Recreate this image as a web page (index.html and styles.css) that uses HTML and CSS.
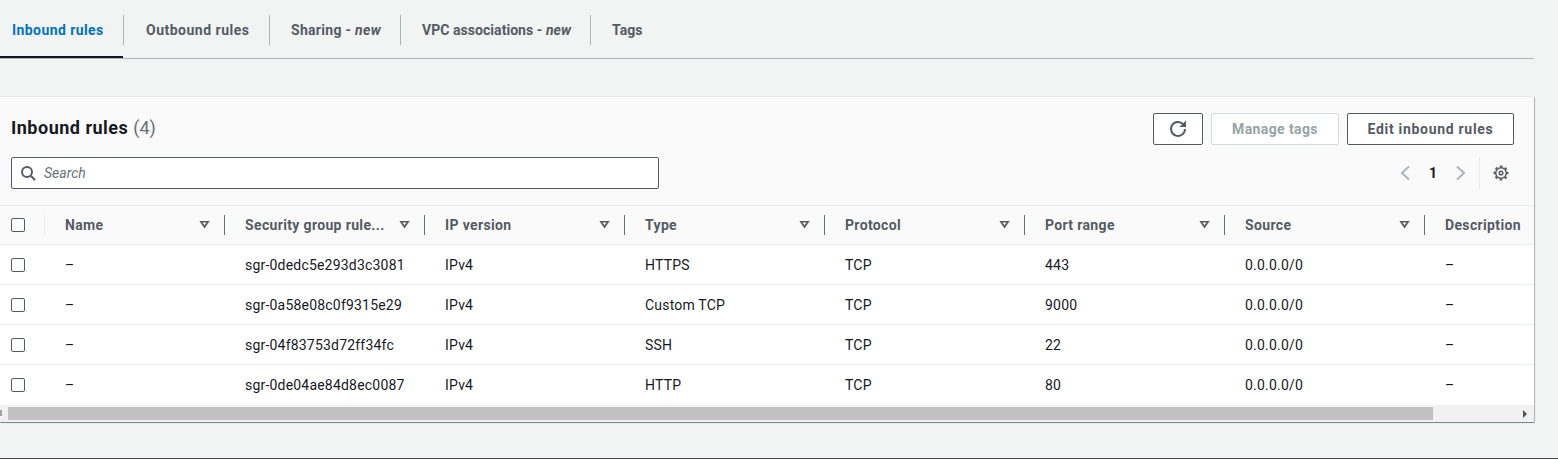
FILE: index.html
```html
<!DOCTYPE html>
<html lang="en">
<head>
<meta charset="utf-8">
<title>Inbound rules</title>
<link rel="stylesheet" href="styles.css">
</head>
<body>
<nav class="tabs">
  <a class="tab tab-inbound active">Inbound rules</a>
  <a class="tab tab-outbound">Outbound rules</a>
  <a class="tab tab-sharing">Sharing - <em>new</em></a>
  <a class="tab tab-vpc">VPC associations - <em>new</em></a>
  <a class="tab tab-tags">Tags</a>
</nav>
<section class="panel">
  <header class="head">
    <div class="head-left">
      <h2 class="title">Inbound rules <span class="count">(4)</span></h2>
      <div class="search">
        <svg class="search-icon" width="16" height="16" viewBox="0 0 16 16"><circle cx="7" cy="7" r="5" /><path d="M10.7 10.7 15 15"/></svg>
        <span class="search-text">Search</span>
      </div>
    </div>
    <div class="head-right">
      <div class="actions">
        <button class="btn btn-icon"><svg width="18" height="18" viewBox="0 0 18 18"><path d="M14.200 4.200A7 7 0 1 0 16 9"/><path class="fill" d="M10.500 7 17 7 17 .5Z"/></svg></button>
        <button class="btn btn-disabled">Manage tags</button>
        <button class="btn btn-edit">Edit inbound rules</button>
      </div>
      <div class="pager">
        <svg class="chev" width="16" height="16" viewBox="0 0 16 16"><path d="M11 1.500 4 8l7 6.500"/></svg>
        <span class="page">1</span>
        <svg class="chev" width="16" height="16" viewBox="0 0 16 16"><path d="M5 1.500 12 8l-7 6.500"/></svg>
        <span class="pager-sep"></span>
        <svg class="gear" width="16" height="16" viewBox="0 0 16 16"><circle cx="8" cy="8" r="5.300"/><circle class="gear-teeth" cx="8" cy="8" r="6.600"/><circle cx="8" cy="8" r="1.800"/></svg>
      </div>
    </div>
  </header>
  <div class="table">
    <div class="row row-head">
      <div class="cell cell-check"><span class="check"></span></div>
      <div class="cell cell-name"><span>Name</span><i class="caret"></i></div>
      <div class="cell cell-col"><span>Security group rule...</span><i class="caret"></i></div>
      <div class="cell cell-col"><span>IP version</span><i class="caret"></i></div>
      <div class="cell cell-col"><span>Type</span><i class="caret"></i></div>
      <div class="cell cell-col"><span>Protocol</span><i class="caret"></i></div>
      <div class="cell cell-col"><span>Port range</span><i class="caret"></i></div>
      <div class="cell cell-col"><span>Source</span><i class="caret"></i></div>
      <div class="cell cell-col cell-last"><span>Description</span></div>
    </div>
    <div class="row">
      <div class="cell cell-check"><span class="check"></span></div>
      <div class="cell cell-name">–</div>
      <div class="cell cell-col">sgr-0dedc5e293d3c3081</div>
      <div class="cell cell-col">IPv4</div>
      <div class="cell cell-col">HTTPS</div>
      <div class="cell cell-col">TCP</div>
      <div class="cell cell-col">443</div>
      <div class="cell cell-col">0.0.0.0/0</div>
      <div class="cell cell-col cell-last">–</div>
    </div>
    <div class="row">
      <div class="cell cell-check"><span class="check"></span></div>
      <div class="cell cell-name">–</div>
      <div class="cell cell-col">sgr-0a58e08c0f9315e29</div>
      <div class="cell cell-col">IPv4</div>
      <div class="cell cell-col">Custom TCP</div>
      <div class="cell cell-col">TCP</div>
      <div class="cell cell-col">9000</div>
      <div class="cell cell-col">0.0.0.0/0</div>
      <div class="cell cell-col cell-last">–</div>
    </div>
    <div class="row">
      <div class="cell cell-check"><span class="check"></span></div>
      <div class="cell cell-name">–</div>
      <div class="cell cell-col">sgr-04f83753d72ff34fc</div>
      <div class="cell cell-col">IPv4</div>
      <div class="cell cell-col">SSH</div>
      <div class="cell cell-col">TCP</div>
      <div class="cell cell-col">22</div>
      <div class="cell cell-col">0.0.0.0/0</div>
      <div class="cell cell-col cell-last">–</div>
    </div>
    <div class="row">
      <div class="cell cell-check"><span class="check"></span></div>
      <div class="cell cell-name">–</div>
      <div class="cell cell-col">sgr-0de04ae84d8ec0087</div>
      <div class="cell cell-col">IPv4</div>
      <div class="cell cell-col">HTTP</div>
      <div class="cell cell-col">TCP</div>
      <div class="cell cell-col">80</div>
      <div class="cell cell-col">0.0.0.0/0</div>
      <div class="cell cell-col cell-last">–</div>
    </div>
  </div>
  <div class="scrollbar">
    <span class="sb-left"></span>
    <span class="sb-thumb"></span>
    <span class="sb-right"></span>
  </div>
</section>
<div class="page-end"></div>
</body>
</html>
```
FILE: styles.css
```css
* { box-sizing: border-box; }
html, body { margin: 0; padding: 0; }
body {
  width: 1558px;
  height: 459px;
  overflow: hidden;
  background: #f2f3f3;
  color: #16191f;
  font-family: Roboto, "Noto Sans", Arial, sans-serif;
  font-size: 14px;
  line-height: 20px;
  display: flex;
  flex-direction: column;
}

.tabs {
  width: 1534px;
  height: 59px;
  display: flex;
  align-items: flex-start;
  border-bottom: 1px solid #aab7b8;
  padding-top: 15px;
  flex: none;
}
.tab {
  height: 30px;
  line-height: 30px;
  padding: 0 0 0 21px;
  font-weight: 700;
  letter-spacing: .35px;
  color: #545b64;
  border-right: 1px solid #aab7b8;
  white-space: nowrap;
}
.tab-inbound { width: 124px; letter-spacing: .42px; }
.tab-outbound { width: 146px; padding-left: 22px; letter-spacing: .5px; }
.tab-sharing { width: 131px; letter-spacing: .3px; }
.tab-vpc { width: 190px; letter-spacing: .05px; }
.tab-tags { border-right: 0; letter-spacing: 0; }
.tab em { font-style: italic; }
.tab.active {
  color: #0073bb;
  padding-left: 12px;
  position: relative;
}
.tab.active::after {
  content: "";
  position: absolute;
  left: 0;
  right: 0;
  top: 41px;
  height: 2px;
  background: #16191f;
}

.panel {
  width: 1534px;
  height: 325px;
  margin-top: 38px;
  background: #fff;
  box-shadow: 1px 0 0 0 rgba(0, 28, 36, .15), 0 1px 0 0 rgba(0, 28, 36, .4), 1px 1px 1px 0 rgba(0, 28, 36, .15), 0 -1px 1px 0 rgba(0, 28, 36, .04);
  flex: none;
  overflow: hidden;
}

.head {
  height: 109px;
  background: #fafafa;
  padding: 16px 20px 0 11px;
  display: flex;
  justify-content: space-between;
  border-bottom: 1px solid #eaeded;
}
.head-left { width: 648px; }
.title {
  margin: 0;
  height: 32px;
  font-size: 18px;
  line-height: 30px;
  font-weight: 700;
  letter-spacing: .5px;
}
.count { font-weight: 400; color: #687078; letter-spacing: 0; }
.search {
  margin-top: 12px;
  height: 32px;
  background: #fff;
  border: 1px solid #545b64;
  border-radius: 2px;
  display: flex;
  align-items: center;
  padding-left: 8px;
  gap: 8px;
}
.search-icon { fill: none; stroke: #545b64; stroke-width: 2; }
.search-text { font-style: italic; color: #687078; }

.head-right { display: flex; flex-direction: column; align-items: flex-end; }
.actions { display: flex; gap: 8px; height: 32px; }
.btn {
  height: 32px;
  font: 700 14px/20px Roboto, "Noto Sans", Arial, sans-serif;
  border: 1px solid #545b64;
  border-radius: 2px;
  background: #fff;
  color: #545b64;
  padding: 0;
}
.btn-icon { width: 50px; display: flex; align-items: center; justify-content: center; }
.btn-icon svg { fill: none; stroke: #545b64; stroke-width: 2; }
.btn-icon .fill { fill: #545b64; stroke: none; }
.btn-disabled { width: 128px; border-color: #d5dbdb; color: #95a5a6; letter-spacing: .4px; }
.btn-edit { width: 167px; letter-spacing: .7px; }

.pager {
  margin-top: 12px;
  height: 32px;
  display: flex;
  align-items: center;
  margin-right: 5px;
}
.chev { fill: none; stroke: #aab7b8; stroke-width: 2; }
.page { width: 38px; text-align: center; font-weight: 700; }
.pager-sep { width: 1px; height: 32px; background: #eaeded; margin: 0 13px 0 11px; }
.gear { fill: none; stroke: #545b64; stroke-width: 1.5; }
.gear-teeth { stroke-width: 1.800; stroke-dasharray: 2.590 2.590; stroke-dashoffset: 1.295; }

.table { width: 1534px; overflow: hidden; }
.row {
  height: 40px;
  display: grid;
  grid-template-columns: 45px 180px repeat(6, 200px) 109px;
  align-items: center;
  border-bottom: 1px solid #eaeded;
  white-space: nowrap;
  letter-spacing: .2px;
}
.row:last-child { border-bottom: 0; }
.row-head {
  height: 39px;
  background: #fafafa;
  font-weight: 700;
  color: #545b64;
  letter-spacing: .35px;
}
.cell { display: flex; align-items: center; height: 100%; }
.cell-check { padding-left: 11px; }
.cell-name { padding: 0 14px 0 20px; justify-content: space-between; }
.cell-col { padding: 0 14px 0 20px; justify-content: space-between; }
.cell-last { padding-right: 0; overflow: hidden; }
.row-head .cell { position: relative; }
.row-head .cell-check::after {
  content: "";
  position: absolute;
  right: 0;
  top: 9px;
  height: 20px;
  width: 1px;
  background: #eaeded;
}
.row-head .cell-name::after,
.row-head .cell-col:not(.cell-last)::after {
  content: "";
  position: absolute;
  right: 0;
  top: 9px;
  height: 20px;
  width: 1px;
  background: #687078;
}
.check {
  display: block;
  width: 14px;
  height: 14px;
  background: #fff;
  border: 1px solid #545b64;
  border-radius: 2px;
}
.caret {
  display: block;
  width: 11px;
  height: 8px;
  margin-right: 1px;
  margin-top: -1px;
  background: #545b64;
  clip-path: polygon(0 0, 100% 0, 50% 100%, 0 0, 30% 25%, 50% 58%, 70% 25%, 30% 25%, 0 0);
}

.scrollbar {
  height: 17px;
  background: #f1f1f1;
  display: flex;
  align-items: flex-start;
  padding-top: 2px;
}
.sb-left { width: 2px; height: 6px; margin-top: 3px; background: #a3a3a3; margin-right: 6px; }
.sb-thumb { width: 1425px; height: 13px; background: #c1c1c1; }
.sb-right {
  width: 0;
  height: 0;
  margin-top: 3px;
  margin-left: 90px;
  border-left: 4px solid #505050;
  border-top: 4px solid transparent;
  border-bottom: 4px solid transparent;
}

.page-end {
  margin-top: auto;
  height: 1px;
  background: #414750;
}
```
